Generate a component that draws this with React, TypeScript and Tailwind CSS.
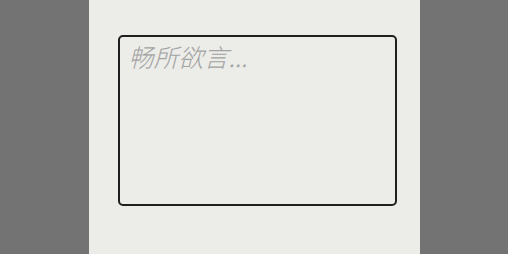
import React from "react";

export default function App() {
  return (
    <div className="w-full h-[254px] bg-[#737373] flex justify-center">
      <div className="w-[331px] h-full bg-[#ecece9] pt-[35px] pl-[29px]">
        <textarea
          placeholder="畅所欲言..."
          className="block w-[279px] h-[171px] border-2 border-[#1f1f1f] rounded-[5px] bg-transparent resize-none outline-none px-[9px] pt-[4px] text-[25px] leading-[1.2] font-light text-[#333] placeholder:text-[#a3a3a3] placeholder:italic"
          style={{ fontFamily: '"Noto Sans CJK SC", "DejaVu Sans", sans-serif' }}
        />
      </div>
    </div>
  );
}
